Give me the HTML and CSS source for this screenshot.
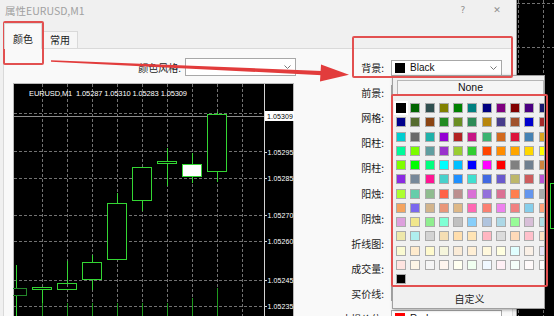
FILE: index.html
```html
<!DOCTYPE html>
<html>
<head>
<meta charset="utf-8">
<link rel="stylesheet" href="styles.css">
</head>
<body>
<div class="screen">
  <div class="dialog">
    <div class="titlebar"><span class="title">属性EURUSD,M1</span><span class="tbtn">?</span><span class="tbtn">✕</span></div>
    <div class="tabs"><div class="tab active">颜色</div><div class="tab">常用</div></div>
    <div class="panel">
      <div class="left">
        <div class="stylerow">
          <span class="lbl">颜色风格:</span>
          <div class="combo wide"><span class="combo-text"></span><svg class="chev" viewBox="0 0 7 4"><polyline points="0.5,0.5 3.5,3.5 6.5,0.5" fill="none" stroke="#777" stroke-width="1"/></svg></div>
        </div>
        <svg class="chart" width="281" height="233" viewBox="13 83 281 233">
          <rect x="13.5" y="83.5" width="280" height="240" fill="#000" stroke="#b8b8b8"/>
          <g stroke="#727272" stroke-dasharray="3 2">
            <line x1="14" y1="113.5" x2="264" y2="113.5"/>
            <line x1="14" y1="151.5" x2="264" y2="151.5"/>
            <line x1="14" y1="178.5" x2="264" y2="178.5"/>
            <line x1="14" y1="215.5" x2="264" y2="215.5"/>
            <line x1="14" y1="241.5" x2="264" y2="241.5"/>
            <line x1="14" y1="280.5" x2="264" y2="280.5"/>
            <line x1="14" y1="306.5" x2="264" y2="306.5"/>
            <line x1="42.5" y1="84" x2="42.5" y2="316"/>
            <line x1="67.5" y1="84" x2="67.5" y2="316"/>
            <line x1="92.5" y1="84" x2="92.5" y2="316"/>
            <line x1="117.5" y1="84" x2="117.5" y2="316"/>
            <line x1="142.5" y1="84" x2="142.5" y2="316"/>
            <line x1="167.5" y1="84" x2="167.5" y2="316"/>
            <line x1="192.5" y1="84" x2="192.5" y2="316"/>
            <line x1="217.5" y1="84" x2="217.5" y2="316"/>
            <line x1="242.5" y1="84" x2="242.5" y2="316"/>
          </g>
          <line x1="14" y1="116.5" x2="264" y2="116.5" stroke="#8c8c8c"/>
          <line x1="264.5" y1="84" x2="264.5" y2="316" stroke="#d4d4d4"/>
          <g stroke="#d4d4d4">
            <line x1="264" y1="152.5" x2="267" y2="152.5"/>
            <line x1="264" y1="178.5" x2="267" y2="178.5"/>
            <line x1="264" y1="215.5" x2="267" y2="215.5"/>
            <line x1="264" y1="241.5" x2="267" y2="241.5"/>
            <line x1="264" y1="280.5" x2="267" y2="280.5"/>
            <line x1="264" y1="306.5" x2="267" y2="306.5"/>
          </g>
          <g class="axis" fill="#fff">
            <text x="267.5" y="155" textLength="26">1.05295</text>
            <text x="267.5" y="181" textLength="26">1.05285</text>
            <text x="267.5" y="218" textLength="26">1.05270</text>
            <text x="267.5" y="244" textLength="26">1.05260</text>
            <text x="267.5" y="283" textLength="26">1.05245</text>
            <text x="267.5" y="309" textLength="26">1.05235</text>
          </g>
          <rect x="265" y="111" width="29" height="10" fill="#fff"/>
          <text class="axis" x="267" y="119" textLength="26" fill="#000">1.05309</text>
          <text class="axis head" x="29" y="96" textLength="158" fill="#fff">EURUSD,M1&#160;&#160;1.05287 1.05310 1.05283 1.05309</text>
          <g stroke="#1e9a1e">
            <line x1="42.5" y1="303" x2="42.5" y2="316"/>
            <line x1="67.5" y1="303" x2="67.5" y2="316"/>
            <line x1="92.5" y1="303" x2="92.5" y2="316"/>
            <line x1="117.5" y1="303" x2="117.5" y2="316"/>
            <line x1="142.5" y1="303" x2="142.5" y2="316"/>
            <line x1="167.5" y1="303" x2="167.5" y2="316"/>
            <line x1="192.5" y1="298" x2="192.5" y2="316"/>
            <line x1="217.5" y1="288" x2="217.5" y2="316"/>
          </g>
          <g stroke="#33d633" fill="none">
            <line x1="16.5" y1="265" x2="16.5" y2="288"/>
            <line x1="16.5" y1="296" x2="16.5" y2="316"/>
            <rect x="7.5" y="288.5" width="19" height="7" stroke="#23862a"/>
            <rect x="32.5" y="287.5" width="19" height="2"/>
            <line x1="42.5" y1="290" x2="42.5" y2="303"/>
            <line x1="67.5" y1="261" x2="67.5" y2="283"/>
            <rect x="57.5" y="283.5" width="19" height="6"/>
            <line x1="92.5" y1="255" x2="92.5" y2="290"/>
            <rect x="82.5" y="262.5" width="19" height="17" fill="#000"/>
            <line x1="117.5" y1="193" x2="117.5" y2="203"/>
            <rect x="107.5" y="203.5" width="19" height="56" fill="#000"/>
            <line x1="142.5" y1="200" x2="142.5" y2="211"/>
            <rect x="132.5" y="167.5" width="19" height="33" fill="#000"/>
            <line x1="167.5" y1="148" x2="167.5" y2="186"/>
            <rect x="157.5" y="161.5" width="19" height="2" fill="#000"/>
            <line x1="192.5" y1="153" x2="192.5" y2="183"/>
            <rect x="182.5" y="164.5" width="19" height="12" fill="#fff"/>
            <line x1="217.5" y1="112" x2="217.5" y2="182"/>
            <rect x="207.5" y="114.5" width="19" height="57" fill="#000"/>
          </g>
        </svg>
      </div>
      <div class="right">
        <div class="row"><span class="lbl">背景:</span><div class="combo"><span class="swatch sw-black"></span><span class="combo-text">Black</span><svg class="chev" viewBox="0 0 7 4"><polyline points="0.5,0.5 3.5,3.5 6.5,0.5" fill="none" stroke="#777" stroke-width="1"/></svg></div></div>
        <div class="row"><span class="lbl">前景:</span><div class="combo"></div></div>
        <div class="row"><span class="lbl">网格:</span><div class="combo"></div></div>
        <div class="row"><span class="lbl">阳柱:</span><div class="combo"></div></div>
        <div class="row"><span class="lbl">阴柱:</span><div class="combo"></div></div>
        <div class="row"><span class="lbl">阳烛:</span><div class="combo"></div></div>
        <div class="row"><span class="lbl">阴烛:</span><div class="combo"></div></div>
        <div class="row"><span class="lbl">折线图:</span><div class="combo"></div></div>
        <div class="row"><span class="lbl">成交量:</span><div class="combo"></div></div>
        <div class="row"><span class="lbl">买价线:</span><div class="combo"></div></div>
        <div class="row"><span class="lbl">止损价位:</span><div class="combo"><span class="swatch sw-red"></span><span class="combo-text">Red</span></div></div>
      </div>
    </div>
  </div>
  <div class="backchart">
    <svg width="37" height="316" viewBox="517 0 37 316">
      <g stroke="#727272" stroke-dasharray="3 2">
        <line x1="518.5" y1="0" x2="518.5" y2="316"/>
        <line x1="543.5" y1="0" x2="543.5" y2="316"/>
        <line x1="517" y1="3.5" x2="554" y2="3.5"/>
        <line x1="517" y1="47.5" x2="554" y2="47.5"/>
      </g>
      <rect x="550.5" y="183.5" width="10" height="45" fill="none" stroke="#33d633"/>
    </svg>
  </div>

  <div class="popup">
    <div class="none-btn">None</div>
    <div class="palette">
      <span class="cell sel" style="background:#000000"></span><span class="cell" style="background:#006400"></span><span class="cell" style="background:#2f4f4f"></span><span class="cell" style="background:#808000"></span><span class="cell" style="background:#008000"></span><span class="cell" style="background:#008080"></span><span class="cell" style="background:#000080"></span><span class="cell" style="background:#800080"></span><span class="cell" style="background:#800000"></span><span class="cell" style="background:#4b0082"></span><span class="cell" style="background:#191970"></span>
      <span class="cell" style="background:#00008b"></span><span class="cell" style="background:#556b2f"></span><span class="cell" style="background:#8b4513"></span><span class="cell" style="background:#228b22"></span><span class="cell" style="background:#6b8e23"></span><span class="cell" style="background:#2e8b57"></span><span class="cell" style="background:#b8860b"></span><span class="cell" style="background:#483d8b"></span><span class="cell" style="background:#a0522d"></span><span class="cell" style="background:#0000cd"></span><span class="cell" style="background:#a52a2a"></span>
      <span class="cell" style="background:#00ced1"></span><span class="cell" style="background:#696969"></span><span class="cell" style="background:#20b2aa"></span><span class="cell" style="background:#9400d3"></span><span class="cell" style="background:#b22222"></span><span class="cell" style="background:#c71585"></span><span class="cell" style="background:#3cb371"></span><span class="cell" style="background:#d2691e"></span><span class="cell" style="background:#dc143c"></span><span class="cell" style="background:#4682b4"></span><span class="cell" style="background:#daa520"></span>
      <span class="cell" style="background:#00fa9a"></span><span class="cell" style="background:#7cfc00"></span><span class="cell" style="background:#5f9ea0"></span><span class="cell" style="background:#9932cc"></span><span class="cell" style="background:#9acd32"></span><span class="cell" style="background:#32cd32"></span><span class="cell" style="background:#ff4500"></span><span class="cell" style="background:#ff8c00"></span><span class="cell" style="background:#ffa500"></span><span class="cell" style="background:#ffd700"></span><span class="cell" style="background:#ffff00"></span>
      <span class="cell" style="background:#7fff00"></span><span class="cell" style="background:#00ff00"></span><span class="cell" style="background:#00ff7f"></span><span class="cell" style="background:#00ffff"></span><span class="cell" style="background:#00bfff"></span><span class="cell" style="background:#0000ff"></span><span class="cell" style="background:#ff00ff"></span><span class="cell" style="background:#ff0000"></span><span class="cell" style="background:#808080"></span><span class="cell" style="background:#708090"></span><span class="cell" style="background:#cd853f"></span>
      <span class="cell" style="background:#8a2be2"></span><span class="cell" style="background:#778899"></span><span class="cell" style="background:#ff1493"></span><span class="cell" style="background:#48d1cc"></span><span class="cell" style="background:#1e90ff"></span><span class="cell" style="background:#40e0d0"></span><span class="cell" style="background:#4169e1"></span><span class="cell" style="background:#6a5acd"></span><span class="cell" style="background:#bdb76b"></span><span class="cell" style="background:#cd5c5c"></span><span class="cell" style="background:#ba55d3"></span>
      <span class="cell" style="background:#adff2f"></span><span class="cell" style="background:#66cdaa"></span><span class="cell" style="background:#8fbc8f"></span><span class="cell" style="background:#ff6347"></span><span class="cell" style="background:#bc8f8f"></span><span class="cell" style="background:#da70d6"></span><span class="cell" style="background:#9370db"></span><span class="cell" style="background:#db7093"></span><span class="cell" style="background:#ff7f50"></span><span class="cell" style="background:#6495ed"></span><span class="cell" style="background:#a9a9a9"></span>
      <span class="cell" style="background:#f4a460"></span><span class="cell" style="background:#7b68ee"></span><span class="cell" style="background:#d2b48c"></span><span class="cell" style="background:#e9967a"></span><span class="cell" style="background:#deb887"></span><span class="cell" style="background:#ff69b4"></span><span class="cell" style="background:#fa8072"></span><span class="cell" style="background:#ee82ee"></span><span class="cell" style="background:#f08080"></span><span class="cell" style="background:#87ceeb"></span><span class="cell" style="background:#ffa07a"></span>
      <span class="cell" style="background:#dda0dd"></span><span class="cell" style="background:#f0e68c"></span><span class="cell" style="background:#90ee90"></span><span class="cell" style="background:#7fffd4"></span><span class="cell" style="background:#c0c0c0"></span><span class="cell" style="background:#87cefa"></span><span class="cell" style="background:#b0c4de"></span><span class="cell" style="background:#add8e6"></span><span class="cell" style="background:#98fb98"></span><span class="cell" style="background:#d8bfd8"></span><span class="cell" style="background:#b0e0e6"></span>
      <span class="cell" style="background:#eee8aa"></span><span class="cell" style="background:#afeeee"></span><span class="cell" style="background:#d3d3d3"></span><span class="cell" style="background:#f5deb3"></span><span class="cell" style="background:#ffdead"></span><span class="cell" style="background:#ffe4b5"></span><span class="cell" style="background:#ffb6c1"></span><span class="cell" style="background:#dcdcdc"></span><span class="cell" style="background:#ffdab9"></span><span class="cell" style="background:#ffc0cb"></span><span class="cell" style="background:#ffe4c4"></span>
      <span class="cell" style="background:#fafad2"></span><span class="cell" style="background:#ffebcd"></span><span class="cell" style="background:#fffacd"></span><span class="cell" style="background:#f5f5dc"></span><span class="cell" style="background:#faebd7"></span><span class="cell" style="background:#ffefd5"></span><span class="cell" style="background:#fff8dc"></span><span class="cell" style="background:#ffffe0"></span><span class="cell" style="background:#e0ffff"></span><span class="cell" style="background:#faf0e6"></span><span class="cell" style="background:#e6e6fa"></span>
      <span class="cell" style="background:#ffe4e1"></span><span class="cell" style="background:#fdf5e6"></span><span class="cell" style="background:#f5f5f5"></span><span class="cell" style="background:#fff5ee"></span><span class="cell" style="background:#fffff0"></span><span class="cell" style="background:#f0fff0"></span><span class="cell" style="background:#f0f8ff"></span><span class="cell" style="background:#fff0f5"></span><span class="cell" style="background:#f5fffa"></span><span class="cell" style="background:#fffafa"></span><span class="cell" style="background:#ffffff"></span>
      <span class="cell" style="background:#000000"></span>
    </div>
    <div class="custom">自定义</div>
  </div>

  <div class="mark m-tab"></div>
  <div class="mark m-bg"></div>
  <div class="mark m-pal"></div>
  <svg class="arrow" width="554" height="316" viewBox="0 0 554 316">
    <polygon points="51,60.2 322,71 322,75.2 51,61.8" fill="#e23c3c"/>
    <polygon points="321,64.5 349,74.8 320,81.5" fill="#e23c3c"/>
  </svg>
</div>
</body>
</html>
```

FILE: styles.css
```css
html, body {
  margin: 0;
  padding: 0;
  background: #000;
}
body {
  font-family: "Noto Sans CJK SC", "Noto Sans", sans-serif;
  font-size: 10px;
  color: #1b1b1b;
}
.screen {
  position: relative;
  display: flex;
  width: 554px;
  height: 316px;
  overflow: hidden;
}
.dialog {
  flex: none;
  width: 516px;
  height: 316px;
  background: #f0f0f0;
  border-right: 1px solid #9c9c9c;
  display: flex;
  flex-direction: column;
}
.titlebar {
  flex: none;
  height: 21px;
  display: flex;
  align-items: center;
  padding: 0 2px 0 5px;
  color: #a0a0a0;
  font-size: 10.5px;
  line-height: 21px;
}
.title { flex: 1; }
.tbtn {
  width: 34px;
  text-align: center;
  font-family: "DejaVu Sans", sans-serif;
  font-size: 9px;
  color: #8e8e8e;
}
.tabs {
  flex: none;
  height: 27px;
  display: flex;
  align-items: flex-end;
  padding-left: 4px;
}
.tab {
  box-sizing: border-box;
  height: 17px;
  width: 36px;
  border: 1px solid #d9d9d9;
  border-bottom: none;
  background: #f6f6f6;
  text-align: center;
  line-height: 16px;
  font-size: 10px;
}
.tab.active {
  height: 26px;
  width: 38px;
  margin-bottom: -1px;
  padding-top: 7px;
  background: #f9f9f9;
  position: relative;
  z-index: 1;
}
.panel {
  flex: 1;
  min-height: 0;
  display: flex;
  margin: 0 3px;
  background: #f9f9f9;
  border: 1px solid #d9d9d9;
  border-bottom: none;
}
.left {
  flex: none;
  width: 283px;
  padding: 9px 0 0 9px;
}
.stylerow {
  display: flex;
  justify-content: flex-end;
  align-items: center;
  gap: 4px;
  height: 18px;
}
.chart {
  display: block;
  margin-top: 7px;
}
.axis {
  font-family: "Liberation Sans", sans-serif;
  font-size: 7px;
}
.head { font-size: 7.5px; }
.right {
  flex: none;
  padding-top: 6px;
  display: flex;
  flex-direction: column;
}
.row {
  flex: none;
  display: flex;
  align-items: center;
  height: 25.1px;
  gap: 7px;
}
.row .lbl {
  width: 88px;
  text-align: right;
}
.combo {
  box-sizing: border-box;
  width: 111px;
  height: 16px;
  background: #fff;
  border: 1px solid #a8a8a8;
  display: flex;
  align-items: center;
  gap: 5px;
  padding: 0 4px 0 3px;
}
.combo.wide { height: 18px; }
.swatch {
  flex: none;
  width: 10px;
  height: 10px;
}
.sw-black { background: #000; }
.sw-red { background: #f00; }
.combo-text {
  flex: 1;
  font-family: "Liberation Sans", sans-serif;
  font-size: 10px;
  color: #111;
}
.chev {
  flex: none;
  width: 7px;
  height: 4px;
}
.backchart {
  flex: 1;
  background: #000;
}
.backchart svg { display: block; }

.popup {
  position: absolute;
  left: 392px;
  top: 75px;
  width: 153px;
  box-sizing: border-box;
  background: #f0f0f0;
  border: 1px solid #a0a0a0;
  box-shadow: 1px 1px 3px rgba(0, 0, 0, 0.35);
  padding: 4px 0 0 4px;
  overflow: hidden;
}
.none-btn {
  box-sizing: border-box;
  width: 147px;
  height: 15px;
  border: 1px solid #b6b6b6;
  background: #f5f5f5;
  font-family: "Liberation Sans", sans-serif;
  font-size: 10.5px;
  line-height: 13px;
  text-align: center;
  color: #111;
}
.palette {
  display: grid;
  grid-template-columns: repeat(11, 10px);
  grid-auto-rows: 10px;
  gap: 4.25px;
  width: 160px;
  margin: 8px 0 0 -1px;
}
.cell {
  box-sizing: border-box;
  width: 10px;
  height: 10px;
  border: 1px solid #ababab;
}
.cell.sel {
  border-color: #000;
  box-shadow: 0 0 0 2px #fff;
}
.custom {
  width: 145px;
  height: 18px;
  margin-top: 6px;
  text-align: center;
  line-height: 18px;
  font-size: 10px;
}
.mark {
  position: absolute;
  box-sizing: border-box;
  border: 2.5px solid #e25050;
  border-radius: 2px;
}
.m-tab { left: 3px; top: 21px; width: 41px; height: 44px; }
.m-bg { left: 352px; top: 36px; width: 161px; height: 42px; }
.m-pal { left: 391px; top: 94px; width: 157px; height: 193px; }
.arrow {
  position: absolute;
  left: 0;
  top: 0;
  pointer-events: none;
}
```
